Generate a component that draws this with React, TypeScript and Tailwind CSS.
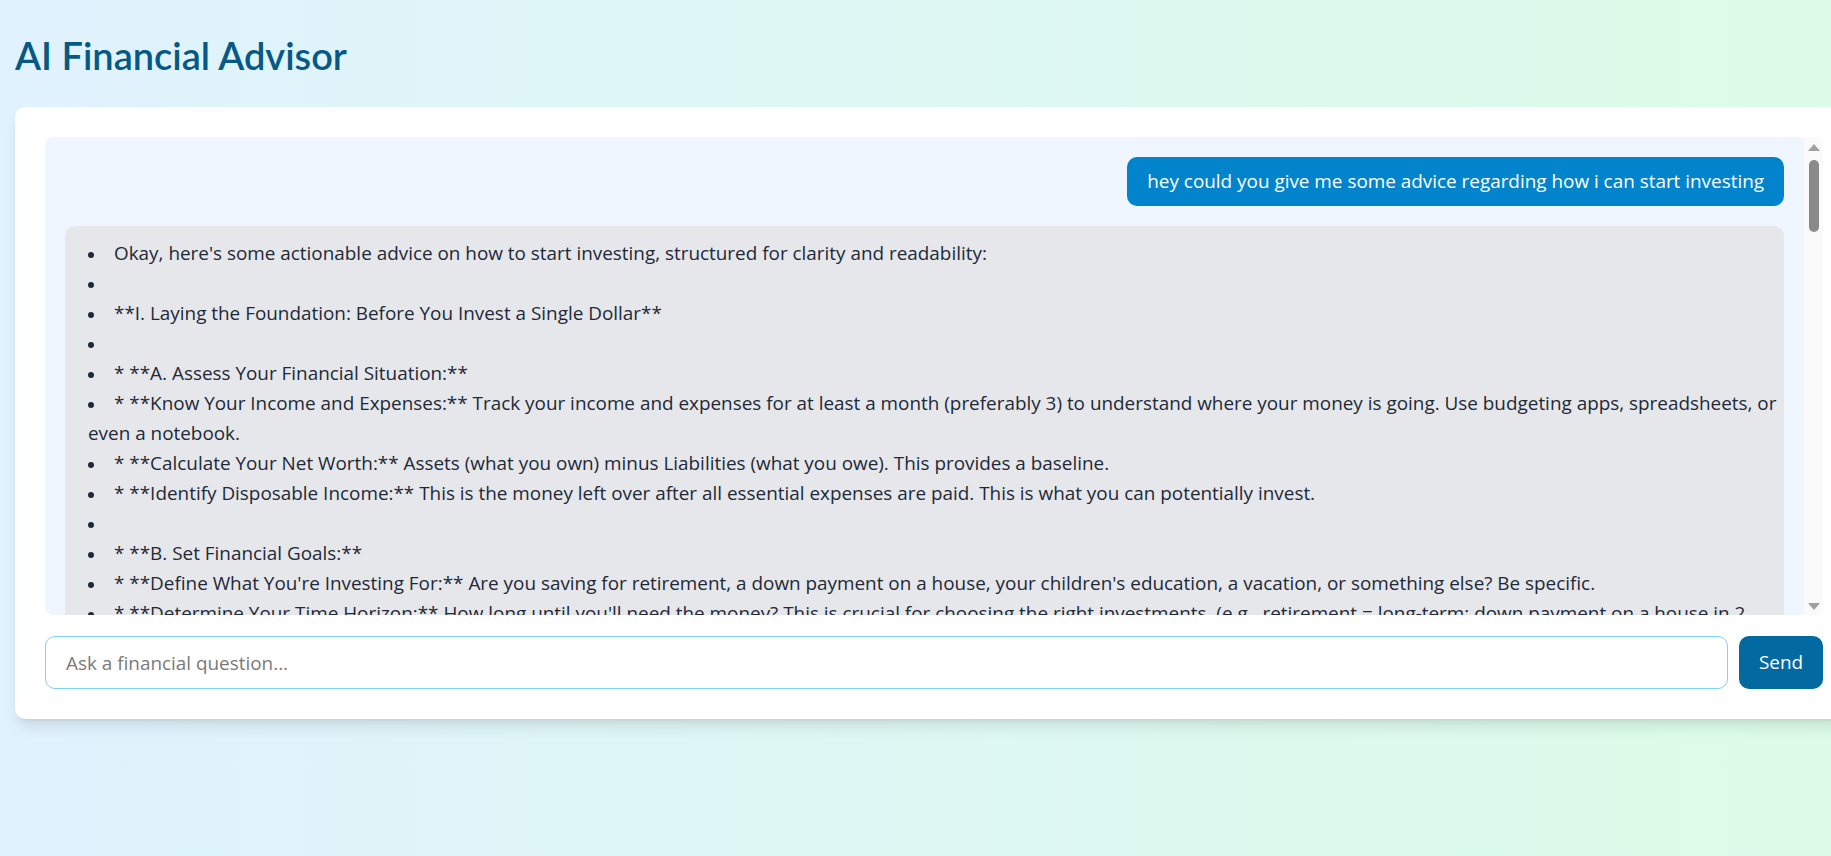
import React from 'react';

const lines: string[] = [
  "Okay, here's some actionable advice on how to start investing, structured for clarity and readability:",
  "",
  "**I. Laying the Foundation: Before You Invest a Single Dollar**",
  "",
  "* **A. Assess Your Financial Situation:**",
  "* **Know Your Income and Expenses:** Track your income and expenses for at least a month (preferably 3) to understand where your money is going. Use budgeting apps, spreadsheets, or even a notebook.",
  "* **Calculate Your Net Worth:** Assets (what you own) minus Liabilities (what you owe). This provides a baseline.",
  "* **Identify Disposable Income:** This is the money left over after all essential expenses are paid. This is what you can potentially invest.",
  "",
  "* **B. Set Financial Goals:**",
  "* **Define What You're Investing For:** Are you saving for retirement, a down payment on a house, your children's education, a vacation, or something else? Be specific.",
  "* **Determine Your Time Horizon:** How long until you'll need the money? This is crucial for choosing the right investments. (e.g., retirement = long-term; down payment on a house in 2 years = short-term).",
  "* **Assess Your Risk Tolerance:** How comfortable are you with the possibility of losing money?",
  "",
  "* **C. Build an Emergency Fund:**",
];

function Scrollbar() {
  return (
    <div className="w-[19px] bg-[#fafafa] flex flex-col items-center shrink-0">
      {/* up arrow */}
      <div className="mt-[7px] w-0 h-0 border-l-[6px] border-r-[6px] border-b-[7px] border-l-transparent border-r-transparent border-b-[#a0a0a0]" />
      <div className="mt-[9px] w-[10px] h-[72px] rounded-full bg-[#8a8a8a]" />
      <div className="flex-1" />
      {/* down arrow */}
      <div className="mb-[5px] w-0 h-0 border-l-[6px] border-r-[6px] border-t-[7px] border-l-transparent border-r-transparent border-t-[#a0a0a0]" />
    </div>
  );
}

export default function App() {
  return (
    <div
      className="min-h-[856px] w-full overflow-hidden bg-gradient-to-r from-[#e0f2fe] to-[#dcfce7] px-[15px]"
      style={{ fontFamily: '"Open Sans", "Noto Sans", sans-serif' }}
    >
      <h1
        className="pt-[31px] pb-[28px] text-[38px] leading-[48px] font-semibold text-[#075985]"
        style={{ fontFamily: 'Lato, sans-serif' }}
      >
        AI Financial Advisor
      </h1>

      <div className="w-[1838px] bg-white rounded-[10px] shadow-lg p-[30px]">
        {/* chat area */}
        <div className="flex h-[478px] rounded-lg bg-[#eff6ff] overflow-hidden">
          <div className="flex-1 overflow-hidden p-5 flex flex-col gap-5">
            <div className="self-end bg-[#0284cc] text-white rounded-[10px] px-5 py-[10px] text-[18.9px] leading-[29px]">
              hey could you give me some advice regarding how i can start investing
            </div>
            <div className="bg-[#e5e7eb] rounded-[10px] pl-[23px] pr-[6px] py-[12px] text-[#1f2937] text-[18.9px] leading-[30px]">
              <ul>
                {lines.map((l, i) => (
                  <li key={i} className="min-h-[30px]">
                    <span className="inline-block w-[26px] align-middle">
                      <span className="block w-[6px] h-[6px] rounded-full bg-[#1f2937]" />
                    </span>
                    {l}
                  </li>
                ))}
              </ul>
            </div>
          </div>
          <Scrollbar />
        </div>

        {/* input row */}
        <div className="mt-[21px] flex gap-[11px]">
          <input
            className="flex-1 h-[53px] border border-[#7dd3fc] rounded-[10px] px-5 text-[18.9px] bg-white outline-none placeholder:text-[#7a7a7a]"
            placeholder="Ask a financial question..."
          />
          <button className="w-[84px] h-[53px] rounded-[10px] bg-[#0369a1] text-white text-[18.9px]">
            Send
          </button>
        </div>
      </div>
    </div>
  );
}
